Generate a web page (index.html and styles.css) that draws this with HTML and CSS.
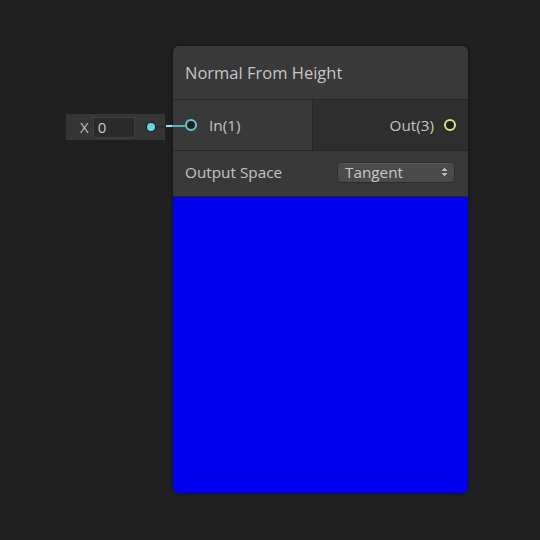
FILE: index.html
```
<!DOCTYPE html>
<html>
<head>
<meta charset="utf-8">
<link rel="stylesheet" href="styles.css">
</head>
<body>
<div class="canvas">
  <div class="input-slot">
    <span class="axis">X</span>
    <span class="field">0</span>
    <span class="stub"></span>
    <span class="dot"></span>
  </div>
  <span class="wire"></span>
  <div class="node">
    <div class="title">Normal From Height</div>
    <div class="ports">
      <div class="port-in">
        <span class="ring in-ring"></span>
        <span class="label">In(1)</span>
      </div>
      <div class="port-out">
        <span class="label">Out(3)</span>
        <span class="ring out-ring"></span>
      </div>
    </div>
    <div class="settings">
      <span class="label">Output Space</span>
      <div class="dropdown">
        <span>Tangent</span>
        <svg class="arrows" width="7" height="10" viewBox="0 0 7 10"><path d="M0.5 4 L3.5 0.8 L6.5 4 Z M0.5 6 L3.5 9.2 L6.5 6 Z" fill="#c0c0c0"/></svg>
      </div>
    </div>
    <div class="preview"></div>
  </div>
</div>
</body>
</html>
```
FILE: styles.css
```
html, body {
  margin: 0;
  padding: 0;
  background: #202020;
}
.canvas {
  position: relative;
  width: 540px;
  height: 540px;
  font-family: "Open Sans", "Liberation Sans", sans-serif;
  color: #c8c8c8;
}
.node {
  position: absolute;
  left: 173px;
  top: 46px;
  width: 295px;
  border-radius: 6px;
  overflow: hidden;
  background: #393939;
  box-shadow: 0 0 3px 1px rgba(0,0,0,0.35);
  z-index: 1;
}
.title {
  height: 54px;
  box-sizing: border-box;
  padding: 0 0 0 12px;
  display: flex;
  align-items: center;
  font-size: 16.5px;
  color: #c6c6c6;
  background: #393939;
  border-bottom: 1px solid #262626;
}
.ports {
  display: flex;
  height: 50px;
  border-bottom: 1px solid #262626;
}
.port-in {
  width: 140px;
  box-sizing: border-box;
  background: #393939;
  display: flex;
  align-items: center;
  padding: 0 0 1px 12px;
  gap: 12px;
  border-right: 1px solid #262626;
}
.port-out {
  flex: 1;
  background: #2e2e2e;
  display: flex;
  align-items: center;
  justify-content: flex-end;
  padding: 0 12px 1px 0;
  gap: 10px;
}
.label {
  font-size: 15.3px;
  color: #c4c4c4;
}
.ring {
  width: 8px;
  height: 8px;
  border-radius: 50%;
  border: 2px solid;
  background: #1f1f1f;
  flex: none;
}
.in-ring { border-color: #6cc4d0; }
.out-ring { border-color: #dfe080; }
.settings {
  height: 46px;
  box-sizing: border-box;
  display: flex;
  align-items: center;
  justify-content: space-between;
  padding: 0 13px 3px 12px;
  background: #393939;
  border-bottom: 1px solid #262626;
}
.dropdown {
  width: 118px;
  height: 21px;
  box-sizing: border-box;
  border-radius: 4px;
  background: #4a4a4a;
  border: 1px solid #2c2c2c;
  box-shadow: inset 0 1px 0 #585858;
  display: flex;
  align-items: center;
  justify-content: space-between;
  padding: 0 6px 0 7px;
  font-size: 15.3px;
  color: #c8c8c8;
}
.preview {
  height: 296px;
  background: #0000ee;
}
.input-slot {
  position: absolute;
  left: 66px;
  top: 114px;
  width: 99px;
  height: 26px;
  background: #353535;
  display: flex;
  align-items: center;
}
.axis {
  margin-left: 14px;
  font-size: 15px;
  color: #bdbdbd;
}
.field {
  margin-left: 4px;
  width: 42px;
  height: 21px;
  box-sizing: border-box;
  background: #2a2a2a;
  border: 1px solid #3f3f3f;
  font-size: 15px;
  color: #c8c8c8;
  padding-left: 4px;
  line-height: 19px;
}
.stub {
  position: absolute;
  left: 88px;
  top: 12px;
  width: 11px;
  height: 2px;
  background: #2c2c2c;
}
.dot {
  position: absolute;
  left: 81px;
  top: 9px;
  width: 8px;
  height: 8px;
  border-radius: 50%;
  background: #6cd4e0;
  box-shadow: 0 0 0 1px #1e1e1e;
}
.wire {
  position: absolute;
  left: 166px;
  top: 125px;
  width: 20px;
  height: 2px;
  background: linear-gradient(90deg, #92e4ee 0 6px, #5aaeb8 6px 20px);
  z-index: 2;
}
```
